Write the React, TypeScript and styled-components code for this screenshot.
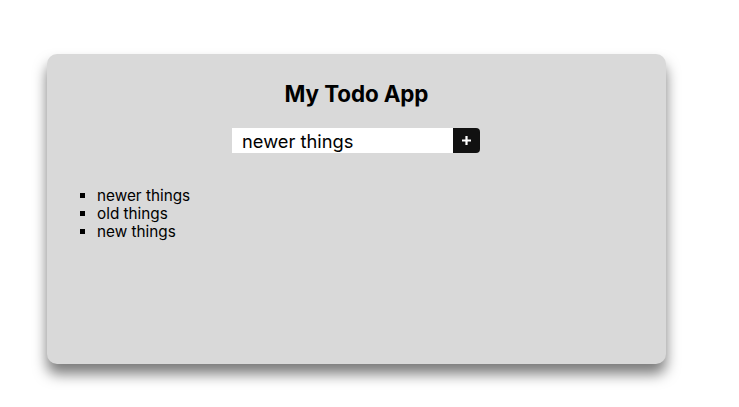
import React from "react";
import styled, { createGlobalStyle } from "styled-components";

const Global = createGlobalStyle`
  html, body { margin: 0; padding: 0; background: #ffffff; }
  body { font-family: Inter, "Noto Sans", sans-serif; color: #000; }
`;

const Page = styled.div`
  min-height: 100vh;
  box-sizing: border-box;
  padding: 54px 0 0 47px;
`;

const Card = styled.section`
  width: 619px;
  height: 310px;
  box-sizing: border-box;
  background: #d9d9d9;
  border-radius: 10px;
  box-shadow: 0 10px 14px rgba(0, 0, 0, 0.52);
  padding-top: 26px;
`;

const Title = styled.h1`
  margin: 0;
  text-align: center;
  font-size: 22.4px;
  font-weight: 700;
  line-height: 28px;
  letter-spacing: -0.1px;
`;

const Form = styled.form`
  display: flex;
  justify-content: center;
  margin-top: 20px;
  padding-right: 1px;
`;

const Input = styled.input`
  width: 221px;
  height: 25px;
  box-sizing: border-box;
  border: none;
  outline: none;
  padding: 0 10px;
  font-family: Inter, "Noto Sans", sans-serif;
  font-size: 18.3px;
  background: #fff;
  color: #000;
`;

const AddButton = styled.button`
  width: 27px;
  height: 25px;
  border: none;
  padding: 0;
  background: #111;
  color: #fff;
  border-radius: 0 4px 4px 0;
  display: flex;
  align-items: center;
  justify-content: center;
`;

const List = styled.ul`
  list-style: square;
  margin: 34px 0 0;
  padding-left: 50px;
`;

const Item = styled.li`
  font-size: 15.3px;
  line-height: 18px;
`;

export default function App() {
  const items = ["newer things", "old things", "new things"];
  return (
    <>
      <Global />
      <Page>
        <Card>
          <Title>My Todo App</Title>
          <Form onSubmit={(e) => e.preventDefault()}>
            <Input defaultValue="newer things" />
            <AddButton type="submit" aria-label="add">
              <svg width="11" height="11" viewBox="0 0 11 11">
                <path d="M5.5 1v9M1 5.5h9" stroke="#fff" strokeWidth="2.2" />
              </svg>
            </AddButton>
          </Form>
          <List>
            {items.map((t) => (
              <Item key={t}>{t}</Item>
            ))}
          </List>
        </Card>
      </Page>
    </>
  );
}
